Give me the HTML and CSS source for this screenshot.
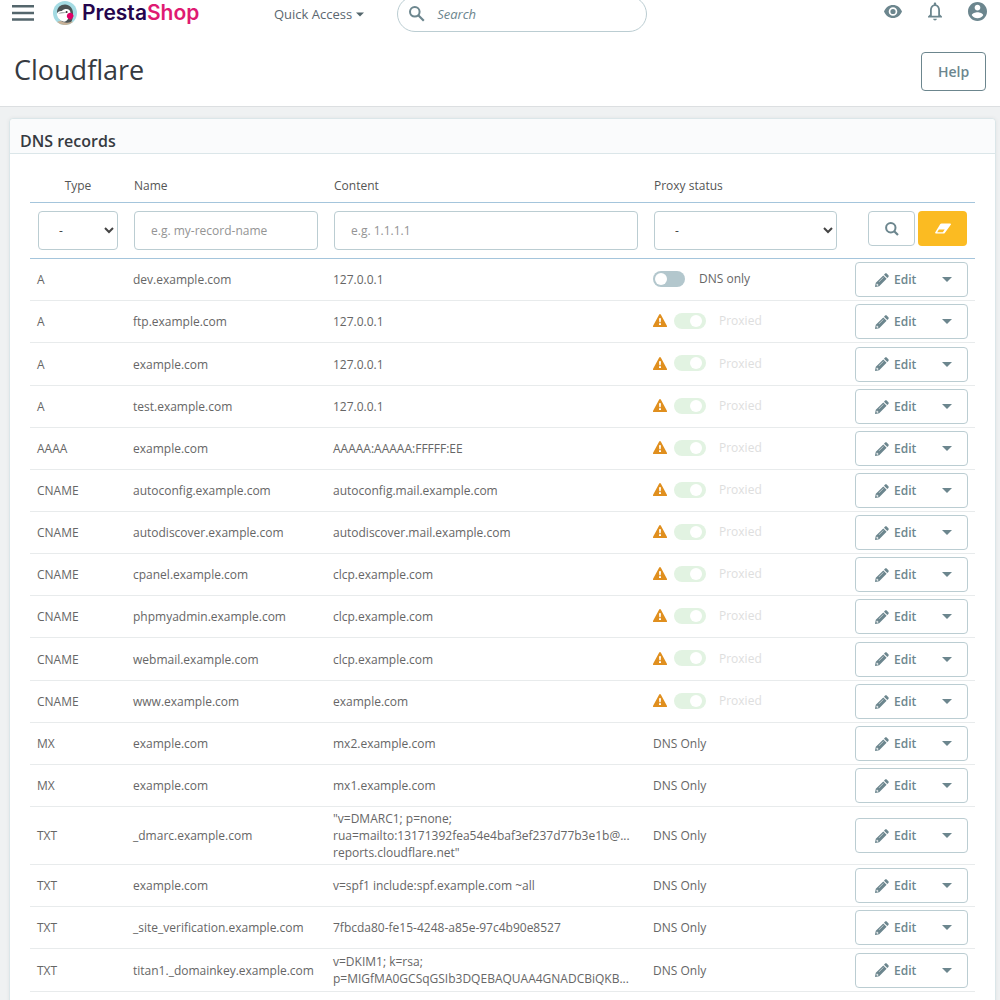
FILE: index.html
```html
<!DOCTYPE html>
<html lang="en">
<head>
<meta charset="utf-8">
<meta name="viewport" content="width=device-width, initial-scale=1">
<title>Cloudflare - PrestaShop</title>
<link rel="stylesheet" href="styles.css">
</head>
<body>
<svg class="sprite" aria-hidden="true">
  <symbol id="pencil" viewBox="0 0 14 14"><path fill-rule="evenodd" d="M10.100 .6c.5-.5 1.100-.5 1.600 0l1.700 1.700c.5.5.5 1.100 0 1.600L12.300 5 9 1.700zM8.300 2.400l3.300 3.300-7.400 7.500L.4 14 0 13.600l.8-3.800zM1.700 10.800l-.3 1.200.7.700 1.200-.3v-.8H2.500v-.8zM8.300 4.200L3.700 8.800l.3.300 4.600-4.600z"/></symbol>
  <symbol id="caret" viewBox="0 0 10 5"><path d="M0 0h10L5 5z"/></symbol>
  <symbol id="warning" viewBox="0 0 14 13"><path fill="#e08f1e" d="M6.200.5a.9.9 0 0 1 1.600 0l6.100 11.200a.9.900 0 0 1-.8 1.300H.9a.9.900 0 0 1-.8-1.300z"/><path fill="#fff" d="M6 4.300h2l-.3 4H6.300zM6 9.200h2v1.900H6z"/></symbol>
</svg>

<header class="top">
  <nav class="bar">
    <button class="icon-btn menu" aria-label="Menu"><svg width="22" height="16" viewBox="0 0 22 16"><path d="M0 0h22v2.500H0zM0 6.700h22v2.500H0zM0 13.300h22v2.500H0z"/></svg></button>
    <a class="logo" href="#">
      <svg width="24" height="24" viewBox="0 0 24 24" aria-hidden="true">
        <circle cx="12" cy="12" r="12" fill="#a4dbe3"/>
        <path fill="#c7b299" d="M4 21c4-2 12-2 16 0a12 12 0 0 1-16 0z"/>
        <path fill="#4b5354" d="M4 11C4 6.500 7.500 3.500 12 3.500s8 3.500 8 9c0 4-.5 7-2 8.500-3 1-7 .8-9-.5C5.500 18 4 14.500 4 11z"/>
        <path fill="#fff" d="M3.800 13c.6-2.200 2.600-3.200 5-3 2.600-2.400 5.600-2.400 7.800-.8 1.700 2 .9 5-.6 7-1.500 3-3.500 4.500-5 4.500-4-1-6.700-3.700-7.200-7.700z"/>
        <path fill="#8f9798" d="M5 12.600c2.500-1.600 6-1.800 9.500-.8-3 0-6.500.8-9.500.8z"/>
        <circle cx="13.600" cy="11" r="1" fill="#333"/>
        <path fill="#df0067" d="M14.500 13c2.500-2.500 5.500-1 6 1.500.3 2-1.500 1.800-2 4-2 .5-3-1-4-1.500-1-1.200-.8-2.500 0-4z"/>
      </svg>
      <span class="wordmark">Presta<b>Shop</b></span>
    </a>
    <button class="quick">Quick Access <svg width="8" height="5"><use href="#caret"/></svg></button>
    <form class="search" role="search">
      <svg width="16" height="16" viewBox="0 0 16 16" aria-hidden="true"><circle cx="5.800" cy="5.800" r="4.800" fill="none" stroke="#6c868e" stroke-width="2"/><path d="M9.300 9.300l5.500 5.500" stroke="#6c868e" stroke-width="2.200"/></svg>
      <input type="search" placeholder="Search" aria-label="Search">
    </form>
    <div class="tools">
      <button class="icon-btn eye" aria-label="View shop"><svg width="18" height="13" viewBox="0 0 18 13"><path fill-rule="evenodd" d="M9 0c4.100 0 7.600 2.700 9 6.500-1.400 3.800-4.900 6.500-9 6.500S1.400 10.300 0 6.500C1.400 2.700 4.900 0 9 0zm0 2.200a4.300 4.300 0 1 0 0 8.600 4.300 4.300 0 0 0 0-8.600zm0 1.700a2.600 2.600 0 1 1 0 5.200 2.600 2.600 0 0 1 0-5.200z"/></svg></button>
      <button class="icon-btn" aria-label="Notifications"><svg width="16" height="19" viewBox="0 0 16 19"><path fill-rule="evenodd" d="M8 18.500c1 0 1.800-.7 1.800-1.700H6.200c0 1 .8 1.700 1.800 1.700zM13 12.500V8c0-2.800-1.400-5-3.800-5.600V1.700C9.200.9 8.700.4 8 .4S6.800.900 6.800 1.700v.7C4.400 3 3 5.200 3 8v4.500l-2 2v1h14v-1zm-1.800 1.200H4.800V8c0-2.300 1.200-4.100 3.200-4.100s3.200 1.800 3.200 4.100z"/></svg></button>
      <button class="icon-btn" aria-label="Account"><svg width="19" height="19" viewBox="2 2 20 20"><path d="M12 2C6.480 2 2 6.480 2 12s4.480 10 10 10 10-4.480 10-10S17.520 2 12 2zm0 3c1.660 0 3 1.340 3 3s-1.340 3-3 3-3-1.340-3-3 1.340-3 3-3zm0 14.200c-2.500 0-4.710-1.280-6-3.220.03-1.990 4-3.080 6-3.080 1.990 0 5.970 1.090 6 3.080-1.290 1.940-3.500 3.220-6 3.220z"/></svg></button>
    </div>
  </nav>
  <div class="heading">
    <h1>Cloudflare</h1>
    <button class="help">Help</button>
  </div>
</header>

<main class="card">
  <h2>DNS records</h2>
  <div class="card-body">
    <table>
      <colgroup><col class="c-type"><col class="c-name"><col><col class="c-proxy"><col class="c-actions"></colgroup>
      <thead>
        <tr class="titles"><th class="center">Type</th><th>Name</th><th>Content</th><th>Proxy status</th><th></th></tr>
        <tr class="filters">
          <td><select aria-label="Type"><option>-</option><option>A</option><option>AAAA</option><option>CNAME</option><option>MX</option><option>TXT</option></select></td>
          <td><input type="text" placeholder="e.g. my-record-name" aria-label="Name"></td>
          <td><input type="text" placeholder="e.g. 1.1.1.1" aria-label="Content"></td>
          <td><select aria-label="Proxy status"><option>-</option><option>Proxied</option><option>DNS only</option></select></td>
          <td><div class="filter-actions">
            <button class="find" aria-label="Search records"><svg width="14" height="14" viewBox="0 0 14 14"><circle cx="5.800" cy="5.800" r="4.700" fill="none" stroke="#6c868e" stroke-width="2"/><path d="M9.200 9.200l3.800 3.800" stroke="#6c868e" stroke-width="2.200"/></svg></button>
            <button class="reset" aria-label="Reset filters"><svg width="16" height="11" viewBox="0 0 16 11"><path fill-rule="evenodd" d="M6.500.5h8.700c.7 0 1 .6.600 1.200l-6 8.200c-.3.400-.7.600-1.200.6H.9c-.7 0-1-.6-.6-1.200L5.300 1.100c.3-.4.700-.6 1.200-.6zM3.900 6.600L2.200 9.200h5.600l1.900-2.600z"/></svg></button>
          </div></td>
        </tr>
      </thead>
      <tbody>
        <tr><td>A</td><td>dev.example.com</td><td>127.0.0.1</td><td><label class="proxy off"><input type="checkbox" role="switch"><span>DNS only</span></label></td><td><div class="group"><button class="edit"><svg width="14" height="14"><use href="#pencil"/></svg>Edit</button><button class="more" aria-label="More actions"><svg width="10" height="5"><use href="#caret"/></svg></button></div></td></tr>
        <tr><td>A</td><td>ftp.example.com</td><td>127.0.0.1</td><td><label class="proxy"><svg width="14" height="13"><use href="#warning"/></svg><input type="checkbox" role="switch" checked disabled><span>Proxied</span></label></td><td><div class="group"><button class="edit"><svg width="14" height="14"><use href="#pencil"/></svg>Edit</button><button class="more" aria-label="More actions"><svg width="10" height="5"><use href="#caret"/></svg></button></div></td></tr>
        <tr><td>A</td><td>example.com</td><td>127.0.0.1</td><td><label class="proxy"><svg width="14" height="13"><use href="#warning"/></svg><input type="checkbox" role="switch" checked disabled><span>Proxied</span></label></td><td><div class="group"><button class="edit"><svg width="14" height="14"><use href="#pencil"/></svg>Edit</button><button class="more" aria-label="More actions"><svg width="10" height="5"><use href="#caret"/></svg></button></div></td></tr>
        <tr><td>A</td><td>test.example.com</td><td>127.0.0.1</td><td><label class="proxy"><svg width="14" height="13"><use href="#warning"/></svg><input type="checkbox" role="switch" checked disabled><span>Proxied</span></label></td><td><div class="group"><button class="edit"><svg width="14" height="14"><use href="#pencil"/></svg>Edit</button><button class="more" aria-label="More actions"><svg width="10" height="5"><use href="#caret"/></svg></button></div></td></tr>
        <tr><td>AAAA</td><td>example.com</td><td>AAAAA:AAAAA:FFFFF:EE</td><td><label class="proxy"><svg width="14" height="13"><use href="#warning"/></svg><input type="checkbox" role="switch" checked disabled><span>Proxied</span></label></td><td><div class="group"><button class="edit"><svg width="14" height="14"><use href="#pencil"/></svg>Edit</button><button class="more" aria-label="More actions"><svg width="10" height="5"><use href="#caret"/></svg></button></div></td></tr>
        <tr><td>CNAME</td><td>autoconfig.example.com</td><td>autoconfig.mail.example.com</td><td><label class="proxy"><svg width="14" height="13"><use href="#warning"/></svg><input type="checkbox" role="switch" checked disabled><span>Proxied</span></label></td><td><div class="group"><button class="edit"><svg width="14" height="14"><use href="#pencil"/></svg>Edit</button><button class="more" aria-label="More actions"><svg width="10" height="5"><use href="#caret"/></svg></button></div></td></tr>
        <tr><td>CNAME</td><td>autodiscover.example.com</td><td>autodiscover.mail.example.com</td><td><label class="proxy"><svg width="14" height="13"><use href="#warning"/></svg><input type="checkbox" role="switch" checked disabled><span>Proxied</span></label></td><td><div class="group"><button class="edit"><svg width="14" height="14"><use href="#pencil"/></svg>Edit</button><button class="more" aria-label="More actions"><svg width="10" height="5"><use href="#caret"/></svg></button></div></td></tr>
        <tr><td>CNAME</td><td>cpanel.example.com</td><td>clcp.example.com</td><td><label class="proxy"><svg width="14" height="13"><use href="#warning"/></svg><input type="checkbox" role="switch" checked disabled><span>Proxied</span></label></td><td><div class="group"><button class="edit"><svg width="14" height="14"><use href="#pencil"/></svg>Edit</button><button class="more" aria-label="More actions"><svg width="10" height="5"><use href="#caret"/></svg></button></div></td></tr>
        <tr><td>CNAME</td><td>phpmyadmin.example.com</td><td>clcp.example.com</td><td><label class="proxy"><svg width="14" height="13"><use href="#warning"/></svg><input type="checkbox" role="switch" checked disabled><span>Proxied</span></label></td><td><div class="group"><button class="edit"><svg width="14" height="14"><use href="#pencil"/></svg>Edit</button><button class="more" aria-label="More actions"><svg width="10" height="5"><use href="#caret"/></svg></button></div></td></tr>
        <tr><td>CNAME</td><td>webmail.example.com</td><td>clcp.example.com</td><td><label class="proxy"><svg width="14" height="13"><use href="#warning"/></svg><input type="checkbox" role="switch" checked disabled><span>Proxied</span></label></td><td><div class="group"><button class="edit"><svg width="14" height="14"><use href="#pencil"/></svg>Edit</button><button class="more" aria-label="More actions"><svg width="10" height="5"><use href="#caret"/></svg></button></div></td></tr>
        <tr><td>CNAME</td><td>www.example.com</td><td>example.com</td><td><label class="proxy"><svg width="14" height="13"><use href="#warning"/></svg><input type="checkbox" role="switch" checked disabled><span>Proxied</span></label></td><td><div class="group"><button class="edit"><svg width="14" height="14"><use href="#pencil"/></svg>Edit</button><button class="more" aria-label="More actions"><svg width="10" height="5"><use href="#caret"/></svg></button></div></td></tr>
        <tr><td>MX</td><td>example.com</td><td>mx2.example.com</td><td>DNS Only</td><td><div class="group"><button class="edit"><svg width="14" height="14"><use href="#pencil"/></svg>Edit</button><button class="more" aria-label="More actions"><svg width="10" height="5"><use href="#caret"/></svg></button></div></td></tr>
        <tr><td>MX</td><td>example.com</td><td>mx1.example.com</td><td>DNS Only</td><td><div class="group"><button class="edit"><svg width="14" height="14"><use href="#pencil"/></svg>Edit</button><button class="more" aria-label="More actions"><svg width="10" height="5"><use href="#caret"/></svg></button></div></td></tr>
        <tr><td>TXT</td><td>_dmarc.example.com</td><td>"v=DMARC1; p=none;<br>rua=mailto:13171392fea54e4baf3ef237d77b3e1b@...<br>reports.cloudflare.net"</td><td>DNS Only</td><td><div class="group"><button class="edit"><svg width="14" height="14"><use href="#pencil"/></svg>Edit</button><button class="more" aria-label="More actions"><svg width="10" height="5"><use href="#caret"/></svg></button></div></td></tr>
        <tr><td>TXT</td><td>example.com</td><td>v=spf1 include:spf.example.com ~all</td><td>DNS Only</td><td><div class="group"><button class="edit"><svg width="14" height="14"><use href="#pencil"/></svg>Edit</button><button class="more" aria-label="More actions"><svg width="10" height="5"><use href="#caret"/></svg></button></div></td></tr>
        <tr><td>TXT</td><td>_site_verification.example.com</td><td>7fbcda80-fe15-4248-a85e-97c4b90e8527</td><td>DNS Only</td><td><div class="group"><button class="edit"><svg width="14" height="14"><use href="#pencil"/></svg>Edit</button><button class="more" aria-label="More actions"><svg width="10" height="5"><use href="#caret"/></svg></button></div></td></tr>
        <tr><td>TXT</td><td>titan1._domainkey.example.com</td><td>v=DKIM1; k=rsa;<br>p=MIGfMA0GCSqGSIb3DQEBAQUAA4GNADCBiQKB...</td><td>DNS Only</td><td><div class="group"><button class="edit"><svg width="14" height="14"><use href="#pencil"/></svg>Edit</button><button class="more" aria-label="More actions"><svg width="10" height="5"><use href="#caret"/></svg></button></div></td></tr>
      </tbody>
    </table>
  </div>
</main>
</body>
</html>
```

FILE: styles.css
```css
* { box-sizing: border-box; }

body {
  margin: 0;
  background: #eff1f2;
  color: #666;
  font: 12px/17px "Open Sans", sans-serif;
}

button, input, select { font: inherit; color: inherit; margin: 0; }
button { cursor: pointer; padding: 0; border: 0; background: none; }
svg { display: block; fill: #6c868e; flex: none; }
.sprite { display: none; }

/* top bar and page heading */
.top { background: #fff; border-bottom: 1px solid #dcdfe1; overflow: hidden; }

.bar { display: flex; align-items: flex-end; height: 32px; padding: 0 13px 0 12px; font-size: 13px; }
.icon-btn { height: 22px; margin-bottom: 8px; display: flex; align-items: center; }
.menu svg { fill: #54666c; }

.logo { display: flex; align-items: center; gap: 5px; margin: 0 0 7px 19px; text-decoration: none; }
.wordmark { font: 600 21px/24px Inter, sans-serif; color: #25054d; width: 120px; }
.wordmark b { font-weight: inherit; color: #df1a72; }

.quick { display: flex; align-items: center; gap: 4px; height: 18px; margin: 0 0 9px 72px; color: #5b6770; }
.quick svg { fill: #54666c; }

.search {
  display: flex;
  align-items: center;
  gap: 12px;
  width: 250px;
  height: 36px;
  margin-left: 33px;
  padding: 0 11px;
  border: 1px solid #bbcdd2;
  border-radius: 18px;
}
.search input { flex: 1; min-width: 0; padding: 0; border: 0; outline: 0; background: none; }
.search input::placeholder { color: #6c868e; font-style: italic; opacity: 1; }

.tools { display: flex; gap: 25px; margin-left: auto; }
.tools .eye { margin-bottom: 10px; }

.heading { display: flex; align-items: flex-start; justify-content: space-between; padding: 20px 14px 15px; }
h1 { margin: 0; font-size: 27px; line-height: 36px; font-weight: 400; color: #363a41; }
.help {
  width: 65px;
  height: 39px;
  border: 1px solid #6c868e;
  border-radius: 4px;
  color: #6c868e;
  font-size: 14px;
  font-weight: 600;
}

/* records panel */
.card {
  margin: 11px 4px 20px 9px;
  background: #fff;
  border: 1px solid #dbe6e9;
  border-radius: 4px;
  box-shadow: 0 0 4px rgba(0, 0, 0, .06);
}
h2 {
  margin: 0;
  padding: 11px 10px 0;
  height: 35px;
  background: #fafbfc;
  border-bottom: 1px solid #dbe6e9;
  border-radius: 4px 4px 0 0;
  color: #363a41;
  font-size: 16px;
  line-height: 22px;
  font-weight: 600;
}
.card-body { padding: 14px 20px 20px; }

table { width: 100%; border-collapse: separate; border-spacing: 0; table-layout: fixed; }
.c-type { width: 96px; }
.c-name { width: 200px; }
.c-proxy { width: 199px; }
.c-actions { width: 130px; }

th { height: 35px; padding: 0 8px; font-weight: 400; text-align: left; color: #555; border-bottom: 1px solid #a4c5dc; }
th.center { text-align: center; }

.filters td { height: 56px; padding: 8px; vertical-align: top; border-bottom: 1px solid #a4c5dc; }
.filters input, .filters select {
  display: block;
  width: 100%;
  height: 39px;
  padding: 0 16px;
  border: 1px solid #bbcdd2;
  border-radius: 4px;
  background: #fff;
}
.filters select { padding-right: 0; color: #444; }
.filters input::placeholder { color: #949494; opacity: 1; }

.filter-actions { display: flex; justify-content: flex-end; gap: 3px; }
.filter-actions button { display: flex; align-items: center; justify-content: center; height: 35px; border-radius: 4px; }
.find { width: 47px; border: 1px solid #bbcdd2; }
.reset { width: 49px; background: #fbbb22; }
.reset svg { fill: #fff; }

tbody td { height: 42px; padding: 3px 7px; vertical-align: middle; white-space: nowrap; border-bottom: 1px solid #e8ebec; }
tbody tr:nth-child(7n+3) td { height: 43px; }

.proxy { display: flex; align-items: center; gap: 7px; padding-bottom: 2px; }
.proxy span { margin-left: 6px; color: #dedede; }
.proxy.off span { margin-left: 7px; color: #666; }
.proxy input {
  appearance: none;
  width: 32px;
  height: 16px;
  padding: 2px;
  border-radius: 8px;
  background: #b3c7cd;
  display: flex;
}
.proxy input::before { content: ""; width: 12px; height: 12px; border-radius: 50%; background: #fff; }
.proxy input:checked { background: #e2f3e2; justify-content: flex-end; padding-right: 4px; }

.group { display: flex; width: 113px; height: 35px; margin-left: auto; border: 1px solid #bbcdd2; border-radius: 4px; }
.edit { display: flex; align-items: center; gap: 5px; flex: 1; padding-left: 19px; color: #6c868e; font-weight: 600; }
.more { display: flex; align-items: center; justify-content: center; width: 40px; }
```
